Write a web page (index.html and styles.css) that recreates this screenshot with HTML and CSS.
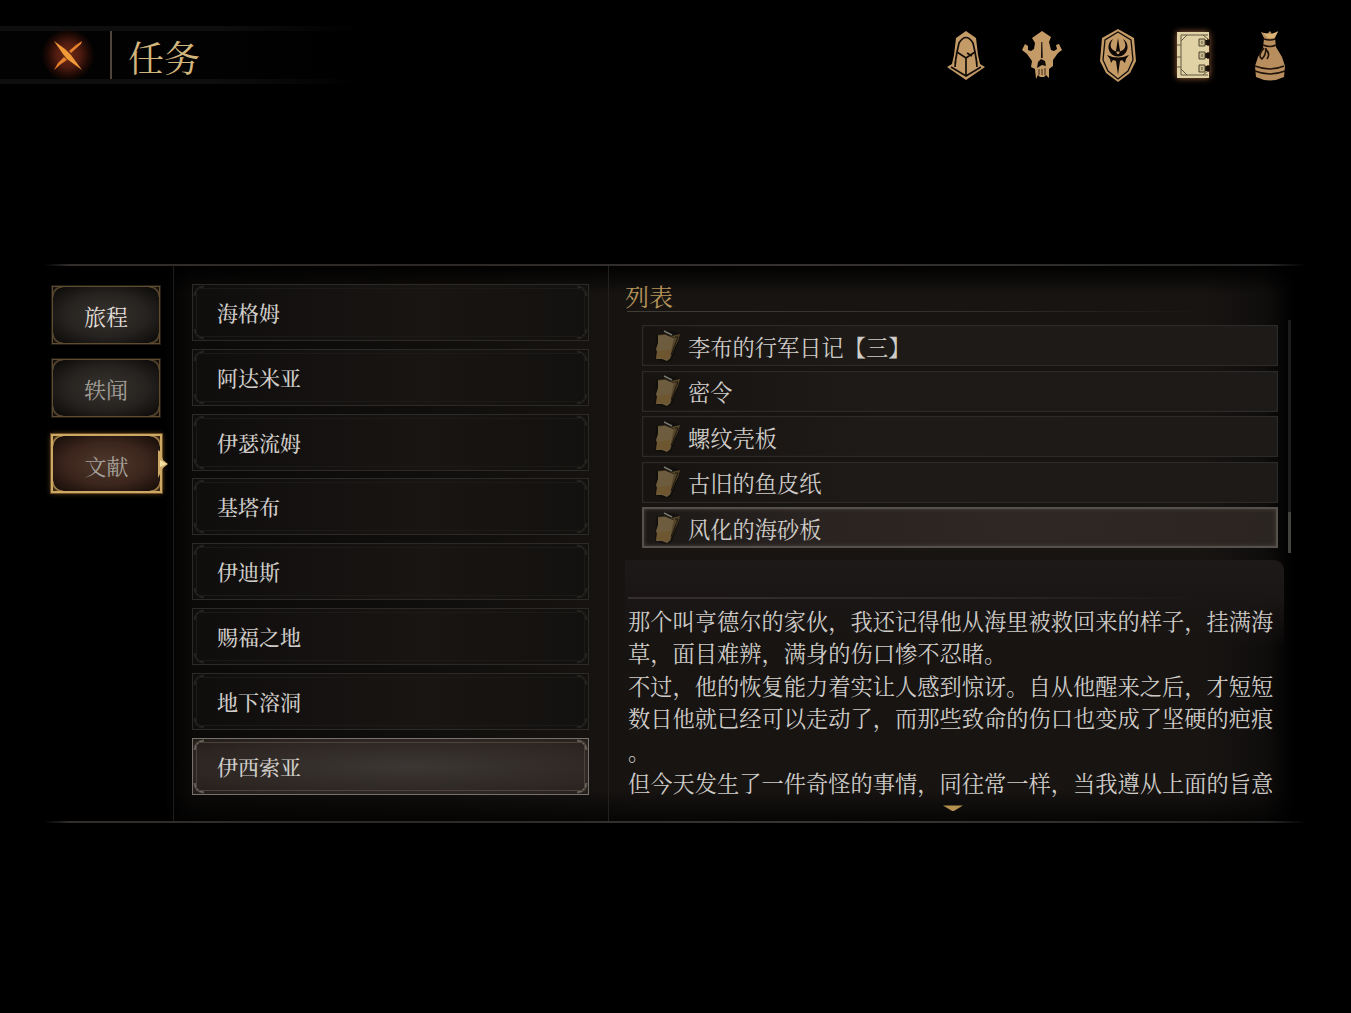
FILE: index.html
```
<!DOCTYPE html>
<html lang="zh-CN">
<head>
    <meta charset="UTF-8">
    <meta name="viewport" content="width=device-width, initial-scale=1.0">
    <title>任务</title>
    <link rel="stylesheet" href="styles.css">
</head>
<body>
    <svg class="defs" width="0" height="0">
        <symbol id="book" viewBox="0 0 28 34">
            <path d="M3 6 L10 4 L12 1 L26 4 L26 12 L18 32 L12 33 L2 30 Z" fill="#0d0b09" opacity=".6"/>
            <path d="M18 7 L27 5 L25 12 L22 18 L17 30 L14 31 Z" fill="#54442a"/>
            <path d="M22 8 L25 8 L18 26" stroke="#1c150c" stroke-width="1" fill="none"/>
            <path d="M5 6 L11 5 L21 9 L20 13 L19 18 L17 29 L14 32 L9 30 L3 30 L4 23 L3 20 L5 14 Z" fill="#6d5d3e"/>
            <path d="M4 22 L18 20 L16 30 L3 29 Z" fill="#6f5228" opacity=".6"/>
            <path d="M11 2 L19 6" stroke="#77766b" stroke-width="1.4"/>
            <path d="M6 6 L12 5 L21 9" stroke="#312719" fill="none"/>
        </symbol>
    </svg>

    <header class="header">
        <div class="title-bar">
            <button class="close" aria-label="关闭">
                <svg width="32" height="34" viewBox="0 0 32 34">
                    <path d="M2 3 L13 11 L19 17 L30 32 L15 21 L11 16 Z" fill="#f09a38"/>
                    <path d="M30 3 L29 6 L19 15 L17 13 L24 7 Z M12 19 L15 22 L9 26 L2 32 L6 25 Z" fill="#e5812c"/>
                </svg>
            </button>
            <h1>任务</h1>
        </div>
        <nav class="menu">
            <svg width="38" height="50" viewBox="0 0 38 50">
                <path d="M19 1 L29 8 L31 25 L33 34 L38 37 L19 50 L0 37 L5 34 L7 25 L9 8 Z" fill="#c49a66"/>
                <path d="M8 34 L10 22 L12 13 Q19 2 26 13 L28 22 L30 34 M4 37 L19 46 L34 37 M10 22 L19 28 L28 22 M19 28 V46 M9 27 L8 37 M29 27 L30 37 M20 23 L25 26" fill="none" stroke="#120d08" stroke-width="1.7"/>
            </svg>
            <svg width="40" height="48" viewBox="0 0 40 48">
                <path d="M20 0 L29 6 L27 11 L29 19 L32 20 L35 18 L34 14 L37 13 L40 19 L36 22 L31 29 L31 35 L27 38 L27 47 L24 44 L22 46 L18 46 L16 44 L14 48 L13 38 L9 36 L10 30 L5 23 L0 19 L3 13 L6 15 L6 19 L9 20 L12 18 L13 12 L10 7 Z" fill="#c49a66"/>
                <path d="M19.300 11 L19 27 L20.700 27 L20.300 11 Z M19 28 L23 30 L24 35 L20 34 L15 37 L16 31 Z" fill="#0c0805"/>
                <path d="M17 38 V44 M20 38 V44 M23 37 V44" stroke="#3b2919"/>
            </svg>
            <svg width="36" height="53" viewBox="0 0 36 53">
                <path d="M18 0 L34 9 L36 32 L30 44 L18 53 L6 44 L0 32 L2 9 Z" fill="#c49a66"/>
                <path d="M18 3 L31 11 L33 31 L28 42 L18 50 L8 42 L3 31 L5 11 Z" fill="none" stroke="#140e09" stroke-width="1.3"/>
                <path d="M13 10 A9.500 9.500 0 1 0 23 10 Q28 17 23 21 Q18 24 13 21 Q8 17 13 10 Z M18 9 L20 22 L19 25 L17 25 L16 22 Z M7 26 Q18 31 29 26 L26 30 L25 34 L22 31 L20 32 L18 46 L16 32 L13 31 L11 34 L10 30 Z" fill="#0d0805"/>
            </svg>
            <svg class="current" width="36" height="48" viewBox="0 0 36 48">
                <path d="M1 1 H33 V8 H31 V15 H33 V21 H31 V28 H33 V34 H31 V41 H33 V47 H1 Z" fill="#e0d2a4"/>
                <path d="M28 9 H34 V14 H28 Z M28 22 H34 V27 H28 Z M28 35 H34 V40 H28 Z" fill="#18100a"/>
                <path d="M23 8 H29 V15 H23 Z M23 21 H29 V28 H23 Z M23 34 H29 V41 H23 Z" fill="#c9bc90" stroke="#4f452f"/>
                <path d="M32 4 H5 V44 H32 M5 10 L11 4 M5 38 L11 44 M27 4 L32 8 M27 44 L32 40 M1 14 H5 M1 26 H5 M1 36 H5 M26 10 V13 M26 23 V26 M26 36 V39" fill="none" stroke="#625741"/>
            </svg>
            <svg width="32" height="51" viewBox="0 0 32 51">
                <path d="M7 2 L13 4 L16 1 L18 4 L24 1 L21 8 L22 17 L28 27 L31 36 L30 47 Q16 54 2 47 L1 36 L4 27 L9 18 L10 8 Z" fill="#b98e5f"/>
                <path d="M9 3 L14 8 L20 8 L24 2 L17 4 Z" fill="#d9b475"/>
                <path d="M10 9 Q16 11 21 9 M9 15 Q16 18 22 15 M10 18 Q3 26 8 29 Q12 25 12 18 M11 19 Q17 23 13 29 M1 36 Q16 42 30 36 M1 41 Q16 47 31 41" fill="none" stroke="#211408" stroke-width="1.6"/>
            </svg>
        </nav>
    </header>

    <main class="panel">
        <aside class="tabs">
            <button class="tab tab-bright">旅程</button>
            <button class="tab">轶闻</button>
            <button class="tab active">文献
                <svg class="pointer" width="10" height="28" viewBox="0 0 10 28">
                    <path d="M0 0 L3 2 L4 7 L5 10 L10 14 L5 18 L3 22 L0 28 Z" fill="#cda864"/>
                    <path d="M2 10 L9 14 L2 17 Z" fill="#f2dda2"/>
                </svg>
            </button>
        </aside>

        <ul class="regions">
            <li>海格姆</li>
            <li>阿达米亚</li>
            <li>伊瑟流姆</li>
            <li>基塔布</li>
            <li>伊迪斯</li>
            <li>赐福之地</li>
            <li>地下溶洞</li>
            <li class="active">伊西索亚</li>
        </ul>

        <section class="content">
            <h2>列表</h2>
            <div class="list-wrap">
                <ul class="list">
                    <li><svg class="book"><use href="#book"/></svg>李布的行军日记【三】</li>
                    <li><svg class="book"><use href="#book"/></svg>密令</li>
                    <li><svg class="book"><use href="#book"/></svg>螺纹壳板</li>
                    <li><svg class="book"><use href="#book"/></svg>古旧的鱼皮纸</li>
                    <li class="active"><svg class="book"><use href="#book"/></svg>风化的海砂板</li>
                </ul>
                <div class="scrollbar"><div class="thumb"></div></div>
            </div>
            <article class="detail">
                <div class="rule"></div>
                <p>那个叫亨德尔的家伙，我还记得他从海里被救回来的样子，挂满海<br>草，面目难辨，满身的伤口惨不忍睹。</p>
                <p>不过，他的恢复能力着实让人感到惊讶。自从他醒来之后，才短短<br>数日他就已经可以走动了，而那些致命的伤口也变成了坚硬的疤痕<br>。</p>
                <p>但今天发生了一件奇怪的事情，同往常一样，当我遵从上面的旨意</p>
                <div class="more"></div>
            </article>
        </section>
    </main>
</body>
</html>
```

FILE: styles.css
```
* {
    box-sizing: border-box;
}
body {
    margin: 0;
    height: 1013px;
    overflow: hidden;
    background-color: #000;
    color: #cfccc8;
    font-family: "Noto Serif CJK SC", "Noto Sans CJK SC", sans-serif;
    font-weight: 400;
}
h1, h2, p, ul {
    margin: 0;
    padding: 0;
    font-weight: 400;
}
ul {
    list-style: none;
}
button {
    font: inherit;
    border: none;
    padding: 0;
}
.defs {
    display: block;
}

/* Header */
.header {
    display: flex;
    justify-content: space-between;
    margin-top: 26px;
    height: 58px;
    padding-right: 54px;
}
.title-bar {
    display: flex;
    align-items: center;
    width: 360px;
    padding-left: 36px;
    background:
        linear-gradient(to right, #0e0e0e 60%, #000) top / 100% 5px no-repeat,
        linear-gradient(to right, #0e0e0e 60%, #000) bottom / 100% 5px no-repeat,
        linear-gradient(to right, #020202 60%, #000);
}
.close {
    display: flex;
    align-items: center;
    justify-content: center;
    width: 64px;
    height: 56px;
    background: radial-gradient(circle, #6d2915 0, #511c10 28%, #200a05 48%, transparent 62%);
}
h1 {
    display: flex;
    align-items: center;
    height: 48px;
    margin-left: 10px;
    padding: 4px 0 0 16px;
    border-left: 2px solid #51443d;
    color: #d3b67e;
    font-size: 36px;
    line-height: 48px;
}
.menu {
    display: grid;
    grid-template-columns: repeat(5, 76px);
    width: 358px;
    justify-content: center;
    justify-items: center;
    align-items: center;
    height: 58px;
}
.menu .current {
    filter: drop-shadow(0 0 3px #a5683f);
}

/* Panel */
.panel {
    display: grid;
    grid-template-columns: 130px 435px 1fr;
    width: 1262px;
    height: 559px;
    margin: 180px 0 0 44px;
    padding: 2px 0;
    background:
        linear-gradient(to right, transparent, #302d2b 2%, #2b2826 30%, #34312f 60%, #2a2826 97%, transparent) 0 0 / 100% 2px no-repeat,
        linear-gradient(to right, transparent, #302d2b 2%, #2b2826 30%, #383432 60%, #2a2826 97%, transparent) 0 557px / 100% 2px no-repeat,
        linear-gradient(to bottom, #000 0, transparent 30px, transparent 525px, rgba(0, 0, 0, .7) 556px),
        linear-gradient(to right, #000 0, #000 120px, #0c0a09 150px, #110f0d 400px, #171412 600px, #171412 1160px, #100e0d 1220px, #000 1250px);
}

/* Tabs */
.tabs {
    display: flex;
    flex-direction: column;
    gap: 15px;
    padding: 20px 0 0 8px;
    border-right: 1px solid #1e1d1c;
}
.tab {
    --edge: #5e4c31;
    position: relative;
    width: 108px;
    height: 58px;
    padding-top: 2px;
    border: 1px solid var(--edge);
    outline: 1px solid #241d13;
    background:
        radial-gradient(circle at 100% 100%, transparent 9px, var(--edge) 10px, #14100c 12px) 0 0 / 10px 10px no-repeat,
        radial-gradient(circle at 0 100%, transparent 9px, var(--edge) 10px, #14100c 12px) 100% 0 / 10px 10px no-repeat,
        radial-gradient(circle at 100% 0, transparent 9px, var(--edge) 10px, #14100c 12px) 0 100% / 10px 10px no-repeat,
        radial-gradient(circle at 0 0, transparent 9px, var(--edge) 10px, #14100c 12px) 100% 100% / 10px 10px no-repeat,
        radial-gradient(ellipse at center, #37332f, #25221f 55%, #0f0d0b 92%);
    color: #a5a19b;
    font-size: 22px;
    line-height: 54px;
}
.tab-bright {
    color: #e2dfda;
}
.tab.active {
    --edge: #b18c4e;
    width: 111px;
    height: 59px;
    margin: 2px 0 0 -1px;
    padding-top: 2px;
    border: 2px solid #cda864;
    outline: 1px solid #6c4c22;
    background-color: #3b251c;
    background-image:
        radial-gradient(circle at 100% 100%, transparent 9px, var(--edge) 10px, #3a2714 12px),
        radial-gradient(circle at 0 100%, transparent 9px, var(--edge) 10px, #3a2714 12px),
        radial-gradient(circle at 100% 0, transparent 9px, var(--edge) 10px, #3a2714 12px),
        radial-gradient(circle at 0 0, transparent 9px, var(--edge) 10px, #3a2714 12px),
        radial-gradient(ellipse at center, #4f372b, #3b251c 55%, #180e09 94%);
    box-shadow: 0 0 5px #6c4c22;
    line-height: 55px;
}
.pointer {
    position: absolute;
    top: 14px;
    right: -8px;
}

/* Region list */
.regions {
    display: flex;
    flex-direction: column;
    gap: 7.8px;
    padding: 18px 0 0 18px;
    border-right: 1px solid #23201e;
}
.regions li {
    --edge: #2b2a27;
    width: 397px;
    height: 57px;
    padding-left: 24px;
    border: 1px solid var(--edge);
    outline: 1px solid #1c1a18;
    outline-offset: -5px;
    background:
        radial-gradient(circle at 100% 100%, transparent 8px, var(--edge) 9px, transparent 11px) 0 0 / 11px 11px no-repeat,
        radial-gradient(circle at 0 100%, transparent 8px, var(--edge) 9px, transparent 11px) 100% 0 / 11px 11px no-repeat,
        radial-gradient(circle at 100% 0, transparent 8px, var(--edge) 9px, transparent 11px) 0 100% / 11px 11px no-repeat,
        radial-gradient(circle at 0 0, transparent 8px, var(--edge) 9px, transparent 11px) 100% 100% / 11px 11px no-repeat,
        linear-gradient(to right, #100e0d, #181513 60%, #13110f);
    font-size: 21px;
    font-weight: 500;
    line-height: 54px;
}
.regions li.active {
    --edge: #77716a;
    outline-color: #4c433c;
    background-image:
        radial-gradient(circle at 100% 100%, transparent 8px, var(--edge) 9px, transparent 11px),
        radial-gradient(circle at 0 100%, transparent 8px, var(--edge) 9px, transparent 11px),
        radial-gradient(circle at 100% 0, transparent 8px, var(--edge) 9px, transparent 11px),
        radial-gradient(circle at 0 0, transparent 8px, var(--edge) 9px, transparent 11px),
        radial-gradient(ellipse at 55% 50%, #3c3734, #2d2622 70%, #241e1a);
}

/* Right side */
.content {
    display: flex;
    flex-direction: column;
    padding: 13px 15px 0 16px;
}
h2 {
    width: 582px;
    height: 33px;
    background: linear-gradient(to right, #403c38, #312e2b 60%, transparent) 2px 100% / 100% 1px no-repeat;
    color: #b4935a;
    font-size: 24px;
    line-height: 34px;
}
.list-wrap {
    display: flex;
    justify-content: space-between;
    height: 233px;
    margin-top: 8px;
    padding-left: 17px;
}
.list {
    display: flex;
    flex-direction: column;
    gap: 4.6px;
    padding-top: 5px;
}
.list li {
    display: flex;
    align-items: center;
    width: 636px;
    height: 41px;
    padding-left: 10px;
    border: 1px solid #2c2a28;
    background: linear-gradient(to right, #161311, #1e1a18 35%, #1d1a18);
    box-shadow: inset 0 0 3px #242220;
    font-size: 22.25px;
    line-height: 40px;
}
.list li.active {
    border: 2px solid #55504c;
    padding-left: 9px;
    background: linear-gradient(to right, #1b1816, #292321 25%, #2e2723 60%, #2b2522);
    box-shadow: inset 0 0 4px #494440;
}
.book {
    width: 28px;
    height: 34px;
    margin-right: 7px;
}
.scrollbar {
    display: flex;
    align-items: flex-end;
    width: 3px;
    background-color: #1e1d1c;
}
.thumb {
    width: 3px;
    height: 41px;
    background-color: #45433d;
}
.detail {
    width: 659px;
    height: 253px;
    margin-top: 7px;
    padding-left: 3px;
    border-radius: 0 10px 0 0;
    background: linear-gradient(to bottom, #1d1918, #1a1615 36px, transparent 90px);
    font-size: 22.25px;
    line-height: 32.4px;
    white-space: nowrap;
}
.rule {
    width: 580px;
    height: 39px;
    margin-bottom: 5px;
    border-bottom: 2px solid;
    border-image: linear-gradient(to right, #35302d, #2b2725 60%, transparent) 1;
}
.more {
    width: 20px;
    height: 6px;
    margin: 7px 0 0 315px;
    background-color: #b5904f;
    clip-path: polygon(0 0, 100% 0, 50% 100%);
}
```
